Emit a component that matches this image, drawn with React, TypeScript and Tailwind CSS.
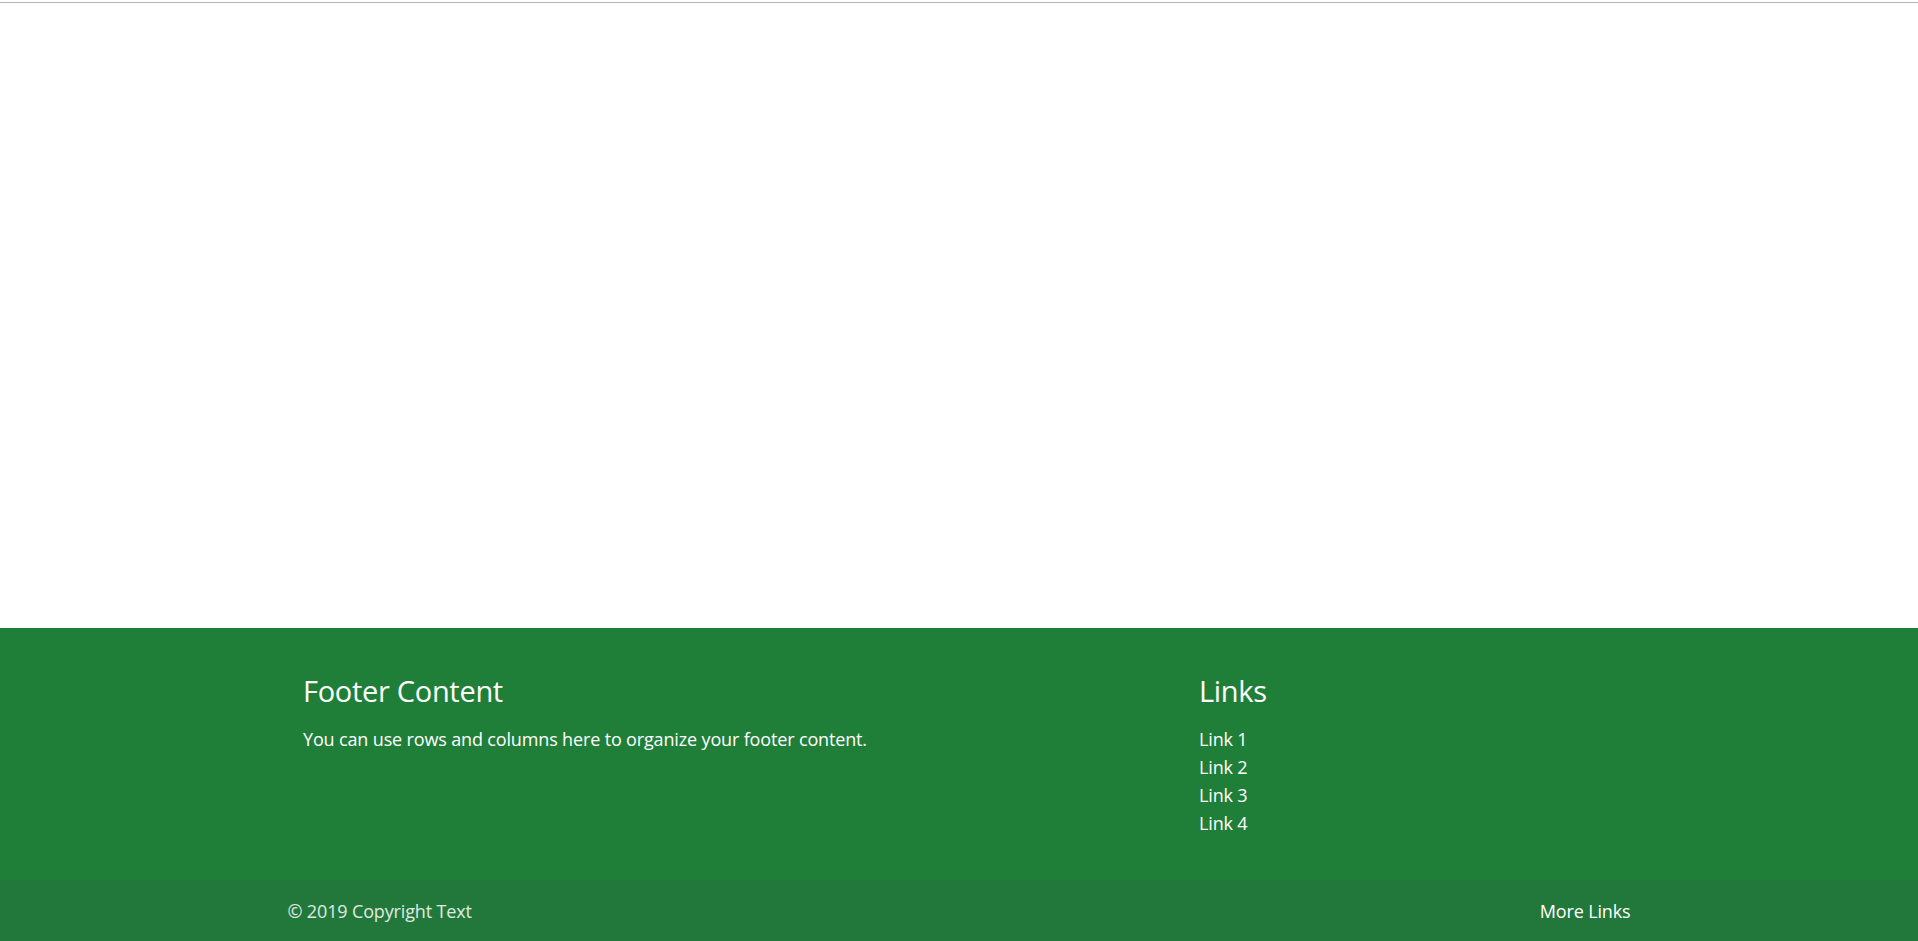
export default function App() {
  const links = ['Link 1', 'Link 2', 'Link 3', 'Link 4'];

  return (
    <div className="min-h-screen flex flex-col bg-white font-['Open_Sans',sans-serif]">
      {/* top rule */}
      <div className="pt-[2px]">
        <div className="h-px bg-[#b4b4b4]" />
      </div>

      <div className="flex-1" />

      <footer className="text-white">
        <div className="bg-[#1f7f39] h-[252px] pt-[44px]">
          <div className="flex pl-[303px]">
            <div className="w-[896px]">
              <h5 className="text-[29px] leading-[37.2px] tracking-[-0.3px] mb-[16px]">Footer Content</h5>
              <p className="text-[18px] leading-[28px] tracking-[-0.15px]">
                You can use rows and columns here to organize your footer content.
              </p>
            </div>
            <div>
              <h5 className="text-[29px] leading-[37.2px] tracking-[-0.3px] mb-[16px]">Links</h5>
              <ul className="text-[18px] leading-[28px] tracking-[-0.15px]">
                {links.map((l) => (
                  <li key={l}>
                    <a href="#">{l}</a>
                  </li>
                ))}
              </ul>
            </div>
          </div>
        </div>

        <div className="bg-[#22783b] h-[61px] flex items-center">
          <div className="w-[1343px] mx-auto flex justify-between text-[18px] leading-[28px] tracking-[-0.15px]">
            <span className="text-white/85">© 2019 Copyright Text</span>
            <a href="#">More Links</a>
          </div>
        </div>
      </footer>
    </div>
  );
}
